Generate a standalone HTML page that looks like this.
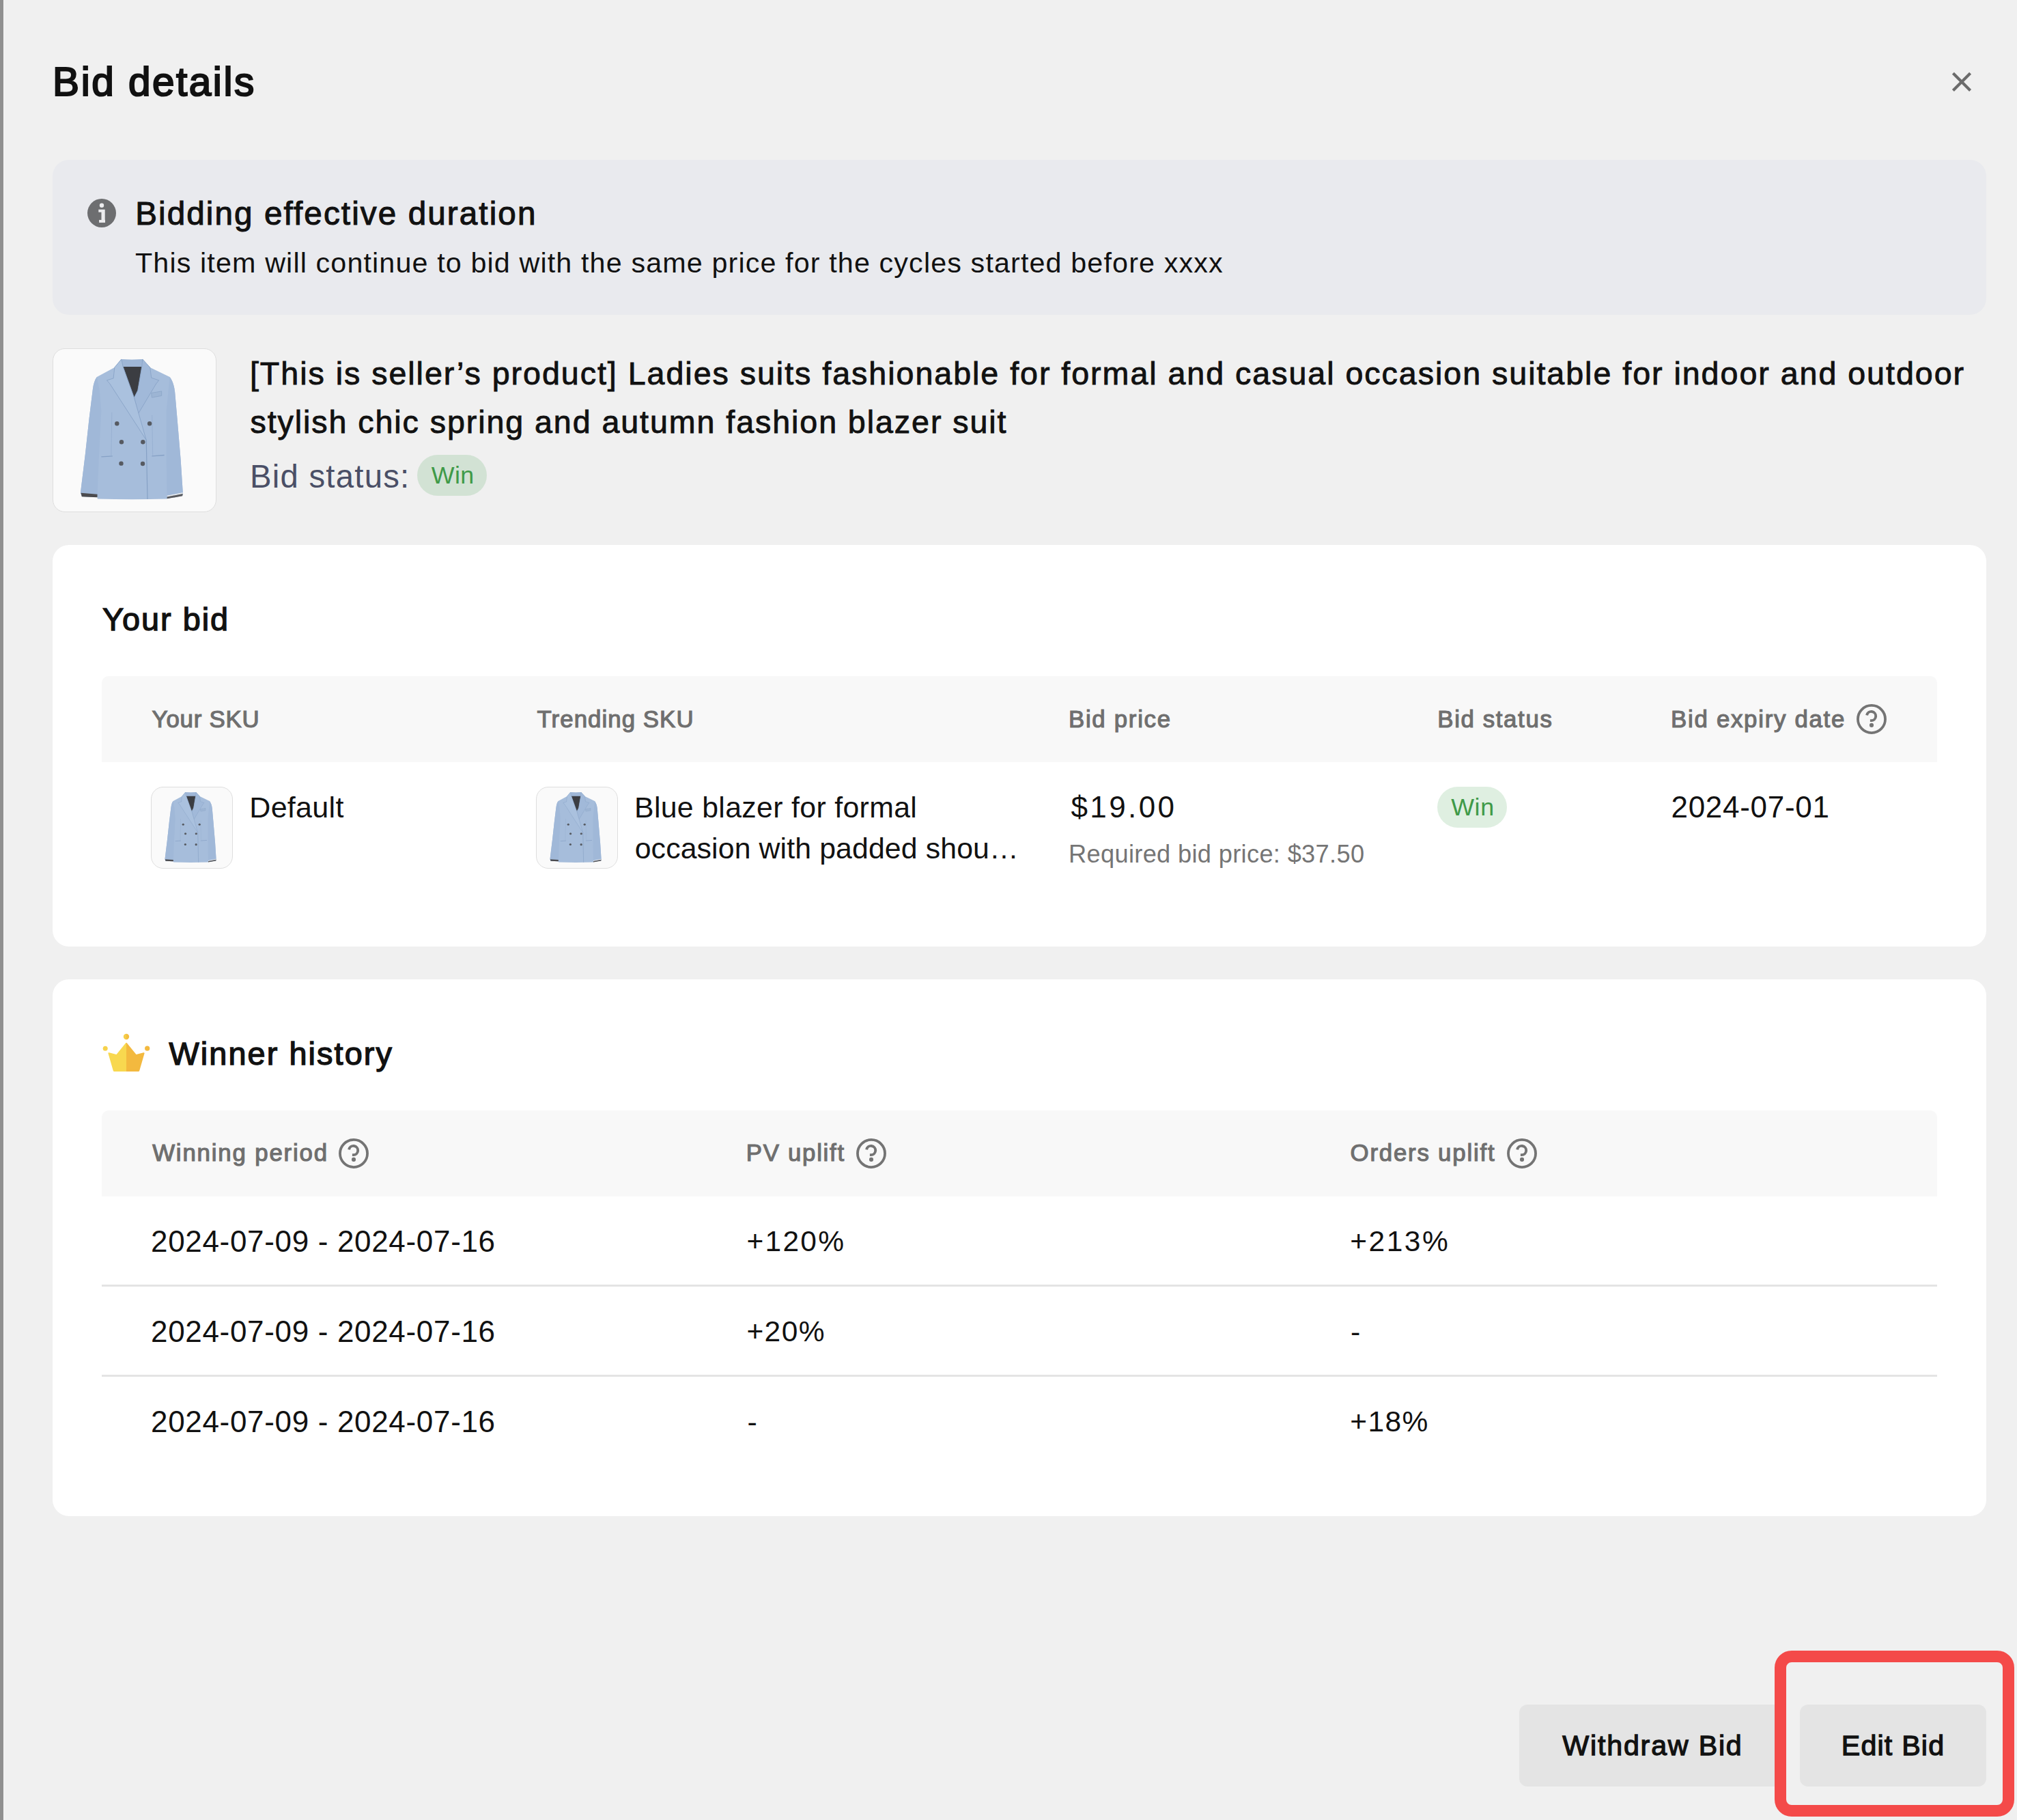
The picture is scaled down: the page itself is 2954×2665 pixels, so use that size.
<!DOCTYPE html>
<html lang="en">
<head>
<meta charset="utf-8">
<title>Bid details</title>
<style>
html,body{margin:0;padding:0}
body{width:2954px;height:2665px;background:#f0f0f0;position:relative;overflow:hidden;font-family:'Liberation Sans',sans-serif}
.abs{position:absolute}
.t{position:absolute;white-space:nowrap;line-height:1;font-family:'Liberation Sans',sans-serif}
.strip{left:0;top:0;width:4.7px;height:2665px;background:#909090;box-shadow:1px 0 0 #f6f6f6}
.alert{left:77px;top:234.2px;width:2832px;height:227.3px;border-radius:24px;background:#e9eaee}
.card{left:77px;width:2832px;background:#fff;border-radius:24px}
.thead{left:149px;width:2688px;background:#f8f8f8;border-radius:10px 10px 0 0}
.pimg{position:absolute;box-sizing:border-box;border:1.5px solid #dedede;background:#fafafa;overflow:hidden}
.badge{border-radius:30px;background:rgba(67,160,78,.17)}
.hr{left:149px;width:2688px;height:3px;background:#e4e4e4}
.btn{top:2496px;height:120px;border-radius:12px;background:#e4e4e4}
.red{left:2598.5px;top:2416.5px;width:351px;height:243.7px;box-sizing:border-box;border:17px solid #f44a49;border-radius:25px}
</style>
</head>
<body>
<svg width="0" height="0" style="position:absolute">
 <defs>
  <symbol id="blazer" viewBox="0 0 240 240">
   <!-- silhouette -->
   <path d="M101 16 Q116 17.5 132 16 L143 28 L172 42 C177 49 178.5 56 179.5 64 L183 104 L188 163 L191.2 212 L190.5 216.5 L168 220.5 L168 221 Q116 222.5 66 221 L65.6 218.5 L43 217.5 L41 212 L48 155 L53.7 103 L59 60 C60 52 62 46 65 42 L91 28 Z" fill="#a6bddb"/>
   <!-- sleeve shading -->
   <path d="M65 42 C62 46 60 52 59 60 L53.7 103 L48 155 L41 212 L43 217.5 L65.6 218.5 L68 160 L71.5 92 L69 62 Z" fill="#a0b8d8"/>
   <path d="M172 42 C177 49 178.5 56 179.5 64 L183 104 L188 163 L191.2 212 L190.5 216.5 L168 220.5 L167 160 L167 92 L170 62 Z" fill="#a0b8d8"/>
   <!-- cuffs -->
   <path d="M41.6 212.3 L65.7 214.2 L65.6 218.7 L43 217.6 Z" fill="#4b4b4e"/>
   <path d="M168 216.2 L191 211.6 L191.2 213.4 L168 218 Z" fill="#e9ecef"/>
   <path d="M168 218 L191.2 213.4 L190.5 216.8 L168 220.8 Z" fill="#5a5a5d"/>
   <!-- lining -->
   <path d="M103.4 27 L131 27 L125 62 L119.7 72.3 Z" fill="#3b3d42"/>
   <path d="M101 16 Q116 17.5 132 16 L131 27 L103.4 27 Z" fill="#9fb7d7"/>
   <!-- right lapel (under) -->
   <path d="M132 16 L143 28 L145 43.3 L156 47 L152 52 L125.7 96 L119.7 72.3 L125 62 L131 27 Z" fill="#a1b9d9" stroke="#88a3c7" stroke-width=".9" stroke-linejoin="round"/>
   <!-- left lapel (over) -->
   <path d="M101 16 L91 28 L89.3 44 L79.7 47 L84 52 L137.5 134.6 L119.7 72.3 L103.4 27 Z" fill="#aac1de" stroke="#88a3c7" stroke-width=".9" stroke-linejoin="round"/>
   <!-- front edge -->
   <path d="M137.5 134.6 L139.3 221.5" stroke="#86a1c5" stroke-width="1.2" fill="none"/>
   <!-- pockets -->
   <path d="M71.5 159.2 L88 158.2" stroke="#86a1c5" stroke-width="1.4"/>
   <path d="M145.7 158.2 L164 156.8" stroke="#86a1c5" stroke-width="1.4"/>
   <path d="M145 65.6 L160 63 L160 69.6 L145.7 72.2 Z" fill="#9db5d4" stroke="#8aa4c6" stroke-width=".8"/>
   <!-- seams -->
   <path d="M87 94 L86 158 M146 98 L147 157" stroke="#97b0d1" stroke-width=".9" fill="none"/>
   <!-- buttons -->
   <g fill="#565a61">
    <circle cx="94.5" cy="110.5" r="3.2"/><circle cx="142.4" cy="110.5" r="3.2"/>
    <circle cx="101.2" cy="137.5" r="3.2"/><circle cx="132.6" cy="137.5" r="3.2"/>
    <circle cx="100.7" cy="169" r="3.2"/><circle cx="132.3" cy="169.4" r="3.2"/>
   </g>
  </symbol>
  <symbol id="help" viewBox="0 0 44 44">
   <circle cx="22" cy="22" r="20.05" fill="none" stroke="#747474" stroke-width="3.8"/>
   <path d="M15.1 16.3 A6.6 6.6 0 1 1 21.34 24.12 L19.9 24.12" fill="none" stroke="#747474" stroke-width="3.9"/>
   <circle cx="22" cy="30.9" r="3.05" fill="#747474"/>
  </symbol>
 </defs>
</svg>

<div class="abs strip"></div>

<!-- close -->
<svg class="abs" style="left:2855px;top:102px" width="36" height="36" viewBox="0 0 36 36"><path d="M5.4 5.3 L30.6 30.6 M30.6 5.3 L5.4 30.6" stroke="#6b6b6b" stroke-width="4.2" fill="none"/></svg>

<!-- alert -->
<div class="abs alert"></div>
<svg class="abs" style="left:128px;top:291px" width="42" height="42" viewBox="0 0 42 42">
 <circle cx="21" cy="21" r="21" fill="#6d6e70"/>
 <circle cx="21" cy="9.8" r="3.2" fill="#ececee"/>
 <path d="M16.3 15.8 H25.7 V31.1 H26 V34.9 H17.1 V31.1 H20.5 V19.7 H16.3 Z" fill="#ececee"/>
</svg>

<!-- product -->
<div class="abs pimg" style="left:77px;top:510px;width:239.5px;height:239.5px;border-radius:18px">
 <svg width="239.5" height="239.5" viewBox="0 0 240 240" style="position:absolute;left:-1.5px;top:-1.5px"><use href="#blazer"/></svg>
</div>
<div class="abs badge" style="left:610.5px;top:665.6px;width:102.6px;height:60px"></div>

<!-- card 1 -->
<div class="abs card" style="top:797.7px;height:588.3px"></div>
<div class="abs thead" style="top:990.3px;height:125.8px"></div>
<svg class="abs" style="left:2719.0px;top:1030.9px" width="44" height="44"><use href="#help"/></svg>
<div class="abs pimg" style="left:221px;top:1152px;width:120px;height:120px;border-radius:18px">
 <svg width="120" height="120" viewBox="0 0 240 240" style="position:absolute;left:-1.5px;top:-1.5px"><use href="#blazer"/></svg>
</div>
<div class="abs pimg" style="left:785px;top:1152px;width:120px;height:120px;border-radius:18px">
 <svg width="120" height="120" viewBox="0 0 240 240" style="position:absolute;left:-1.5px;top:-1.5px"><use href="#blazer"/></svg>
</div>
<div class="abs badge" style="left:2105.2px;top:1151.9px;width:101.8px;height:60px"></div>

<!-- card 2 -->
<div class="abs card" style="top:1434.1px;height:785.7px"></div>
<svg class="abs" style="left:148px;top:1510px" width="76" height="64" viewBox="148 1510 76 64">
 <defs>
  <clipPath id="cl"><rect x="148" y="1510" width="37" height="64"/></clipPath>
  <clipPath id="cr"><rect x="185" y="1510" width="40" height="64"/></clipPath>
 </defs>
 <g clip-path="url(#cl)" fill="#f8d84f" stroke="#f8d84f" stroke-width="2.2" stroke-linejoin="round">
  <path d="M159.5 1542.3 L171 1545.3 L185 1528 L199 1545.3 L210.5 1542.3 L203.1 1567.8 L166.9 1567.8 Z"/>
 </g>
 <g clip-path="url(#cr)" fill="#f3b93f" stroke="#f3b93f" stroke-width="2.2" stroke-linejoin="round">
  <path d="M159.5 1542.3 L171 1545.3 L185 1528 L199 1545.3 L210.5 1542.3 L203.1 1567.8 L166.9 1567.8 Z"/>
 </g>
 <circle cx="154.2" cy="1535.2" r="3.5" fill="#f6d24c"/>
 <circle cx="185" cy="1518" r="4.2" fill="#f5cd48" clip-path="url(#cl)"/>
 <circle cx="185" cy="1518" r="4.2" fill="#f3be41" clip-path="url(#cr)"/>
 <circle cx="215.7" cy="1535.2" r="3.6" fill="#f3b93f"/>
</svg>
<div class="abs thead" style="top:1626.1px;height:125.9px"></div>
<svg class="abs" style="left:496.0px;top:1667.0px" width="44" height="44"><use href="#help"/></svg>
<svg class="abs" style="left:1254.0px;top:1667.0px" width="44" height="44"><use href="#help"/></svg>
<svg class="abs" style="left:2207.1px;top:1667.0px" width="44" height="44"><use href="#help"/></svg>
<div class="abs hr" style="top:1881px"></div>
<div class="abs hr" style="top:2013px"></div>

<!-- footer -->
<div class="abs btn" style="left:2225.4px;width:386.6px"></div>
<div class="abs btn" style="left:2636px;width:273px"></div>
<div class="abs red"></div>

<span class="t" style="left:77.10px;top:91.07px;font-size:58.5px;font-weight:400;color:#111;letter-spacing:2.514px;-webkit-text-stroke:2.2px #111">Bid details</span>
<span class="t" style="left:198.15px;top:289.18px;font-size:47.6px;font-weight:400;color:#111;letter-spacing:2.107px;-webkit-text-stroke:1.1px #111">Bidding effective duration</span>
<span class="t" style="left:198.00px;top:365.30px;font-size:41.3px;font-weight:400;color:#111;letter-spacing:1.117px">This item will continue to bid with the same price for the cycles started before xxxx</span>
<span class="t" style="left:365.95px;top:524.32px;font-size:46.6px;font-weight:400;color:#111;letter-spacing:1.967px;-webkit-text-stroke:0.9px #111">[This is seller’s product] Ladies suits fashionable for formal and casual occasion suitable for indoor and outdoor</span>
<span class="t" style="left:366.45px;top:595.32px;font-size:46.6px;font-weight:400;color:#111;letter-spacing:1.927px;-webkit-text-stroke:0.9px #111">stylish chic spring and autumn fashion blazer suit</span>
<span class="t" style="left:365.90px;top:674.03px;font-size:47.3px;font-weight:400;color:#4a4f66;letter-spacing:1.251px">Bid status:</span>
<span class="t" style="left:631.80px;top:678.75px;font-size:35.8px;font-weight:400;color:#3f9a48;letter-spacing:0.380px">Win</span>
<span class="t" style="left:150.10px;top:883.95px;font-size:46.8px;font-weight:400;color:#111;letter-spacing:2.003px;-webkit-text-stroke:1.4px #111">Your bid</span>
<span class="t" style="left:222.60px;top:1035.79px;font-size:34.8px;font-weight:400;color:#6f6f6f;letter-spacing:0.801px;-webkit-text-stroke:1.2px #6f6f6f">Your SKU</span>
<span class="t" style="left:786.60px;top:1035.79px;font-size:34.8px;font-weight:400;color:#6f6f6f;letter-spacing:1.061px;-webkit-text-stroke:1.2px #6f6f6f">Trending SKU</span>
<span class="t" style="left:1565.00px;top:1035.79px;font-size:34.8px;font-weight:400;color:#6f6f6f;letter-spacing:1.709px;-webkit-text-stroke:1.2px #6f6f6f">Bid price</span>
<span class="t" style="left:2105.30px;top:1035.79px;font-size:34.8px;font-weight:400;color:#6f6f6f;letter-spacing:1.633px;-webkit-text-stroke:1.2px #6f6f6f">Bid status</span>
<span class="t" style="left:2447.10px;top:1035.79px;font-size:34.8px;font-weight:400;color:#6f6f6f;letter-spacing:1.720px;-webkit-text-stroke:1.2px #6f6f6f">Bid expiry date</span>
<span class="t" style="left:365.30px;top:1160.66px;font-size:43px;font-weight:400;color:#111;letter-spacing:0.301px">Default</span>
<span class="t" style="left:929.00px;top:1160.83px;font-size:42.8px;font-weight:400;color:#111;letter-spacing:0.337px">Blue blazer for formal</span>
<span class="t" style="left:929.70px;top:1221.13px;font-size:42.8px;font-weight:400;color:#111;letter-spacing:0.120px">occasion with padded shou…</span>
<span class="t" style="left:1568.50px;top:1159.82px;font-size:44px;font-weight:400;color:#111;letter-spacing:3.379px">$19.00</span>
<span class="t" style="left:1565.00px;top:1232.91px;font-size:36.2px;font-weight:400;color:#757575;letter-spacing:0.342px">Required bid price: $37.50</span>
<span class="t" style="left:2125.20px;top:1164.75px;font-size:35.8px;font-weight:400;color:#3f9a48;letter-spacing:0.630px">Win</span>
<span class="t" style="left:2447.50px;top:1159.82px;font-size:44px;font-weight:400;color:#111;letter-spacing:0.711px">2024-07-01</span>
<span class="t" style="left:247.60px;top:1519.65px;font-size:46.8px;font-weight:400;color:#111;letter-spacing:2.095px;-webkit-text-stroke:1.4px #111">Winner history</span>
<span class="t" style="left:223.20px;top:1671.49px;font-size:34.8px;font-weight:400;color:#6f6f6f;letter-spacing:1.834px;-webkit-text-stroke:1.2px #6f6f6f">Winning period</span>
<span class="t" style="left:1092.80px;top:1671.49px;font-size:34.8px;font-weight:400;color:#6f6f6f;letter-spacing:1.710px;-webkit-text-stroke:1.2px #6f6f6f">PV uplift</span>
<span class="t" style="left:1977.60px;top:1671.49px;font-size:34.8px;font-weight:400;color:#6f6f6f;letter-spacing:1.788px;-webkit-text-stroke:1.2px #6f6f6f">Orders uplift</span>
<span class="t" style="left:221.00px;top:1796.32px;font-size:44px;font-weight:400;color:#111;letter-spacing:0.674px">2024-07-09 - 2024-07-16</span>
<span class="t" style="left:1093.40px;top:1796.89px;font-size:42.5px;font-weight:400;color:#111;letter-spacing:2.268px">+120%</span>
<span class="t" style="left:1977.30px;top:1796.89px;font-size:42.5px;font-weight:400;color:#111;letter-spacing:2.493px">+213%</span>
<span class="t" style="left:221.00px;top:1928.32px;font-size:44px;font-weight:400;color:#111;letter-spacing:0.674px">2024-07-09 - 2024-07-16</span>
<span class="t" style="left:1093.40px;top:1928.89px;font-size:42.5px;font-weight:400;color:#111;letter-spacing:1.403px">+20%</span>
<span class="t" style="left:1978.00px;top:1929.16px;font-size:43px;font-weight:400;color:#111;letter-spacing:0.000px">-</span>
<span class="t" style="left:221.00px;top:2060.32px;font-size:44px;font-weight:400;color:#111;letter-spacing:0.674px">2024-07-09 - 2024-07-16</span>
<span class="t" style="left:1094.40px;top:2061.16px;font-size:43px;font-weight:400;color:#111;letter-spacing:0.000px">-</span>
<span class="t" style="left:1977.30px;top:2060.89px;font-size:42.5px;font-weight:400;color:#111;letter-spacing:1.403px">+18%</span>
<span class="t" style="left:2288.35px;top:2535.99px;font-size:41.2px;font-weight:400;color:#111;letter-spacing:1.799px;-webkit-text-stroke:1.3px #111">Withdraw Bid</span>
<span class="t" style="left:2696.75px;top:2535.99px;font-size:41.2px;font-weight:400;color:#111;letter-spacing:1.195px;-webkit-text-stroke:1.3px #111">Edit Bid</span>
</body>
</html>
